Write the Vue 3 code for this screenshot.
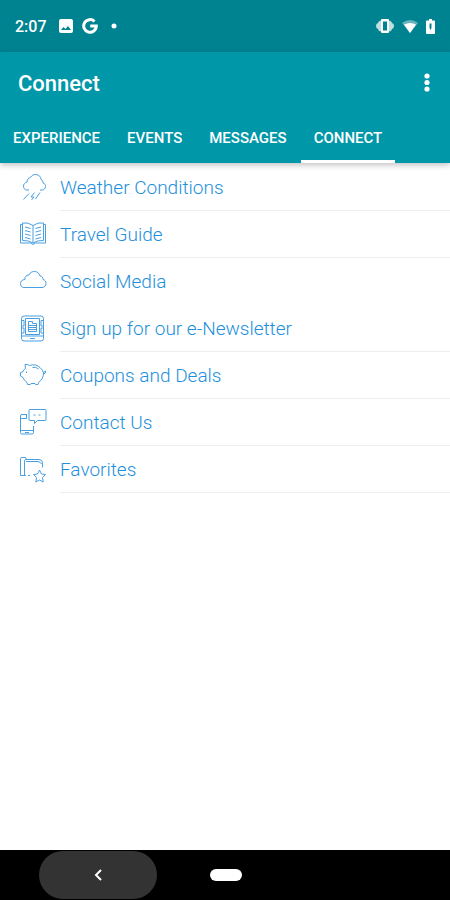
<script setup>
import { ref } from 'vue'

const tabs = ['Experience', 'Events', 'Messages', 'Connect']
const active = ref('Connect')

const links = [
  { icon: 'weather', label: 'Weather Conditions' },
  { icon: 'book', label: 'Travel Guide' },
  { icon: 'cloud', label: 'Social Media', plain: true },
  { icon: 'news', label: 'Sign up for our e-Newsletter' },
  { icon: 'piggy', label: 'Coupons and Deals' },
  { icon: 'contact', label: 'Contact Us' },
  { icon: 'favorites', label: 'Favorites' },
]
</script>

<template>
  <div class="screen">
    <div class="status">
      <span class="time">2:07</span>
      <svg class="photo" width="14" height="14" viewBox="0 0 14 14">
        <path fill-rule="evenodd" d="M2 0h10a2 2 0 0 1 2 2v10a2 2 0 0 1-2 2H2a2 2 0 0 1-2-2V2a2 2 0 0 1 2-2zM2 11h10L9 7 6.500 10 4.500 8z" />
      </svg>
      <svg class="google" width="16" height="16" viewBox="0 0 16 16">
        <path class="thick" d="M12.500 3.500A6.300 6.300 0 1 0 14.300 8H8.200" />
      </svg>
      <svg class="dot" width="6" height="6" viewBox="0 0 6 6"><circle cx="3" cy="3" r="2.500" /></svg>
      <svg class="vibrate" width="18" height="14" viewBox="0 0 18 14">
        <path fill-rule="evenodd" d="M6 0h6a1 1 0 0 1 1 1v12a1 1 0 0 1-1 1H6a1 1 0 0 1-1-1V1a1 1 0 0 1 1-1zM7 2.500v9h4v-9z" />
        <path class="dim" d="M5 1.500v11Q2.500 12.500 2 10 0 9.500 0 7T2 4Q2.500 1.500 5 1.500zM13 1.500v11Q15.500 12.500 16 10 18 9.500 18 7T16 4Q15.500 1.500 13 1.500z" />
      </svg>
      <svg class="wifi" width="16" height="13" viewBox="0 0 16 13">
        <path class="faint" d="M0 3Q8-3 16 3L8 13z" />
        <path d="M2 4.500Q8 1.500 14 4.500L8 13z" />
      </svg>
      <svg class="battery" width="9" height="15" viewBox="0 0 9 15">
        <path fill-rule="evenodd" d="M3 0h3v1.500h2a1 1 0 0 1 1 1V14a1 1 0 0 1-1 1H1a1 1 0 0 1-1-1V2.500a1 1 0 0 1 1-1h2zM3.500 4.500v4l.5 2h1l.5-2v-4z" />
      </svg>
    </div>

    <header class="header">
      <div class="bar">
        <h1>Connect</h1>
        <button class="more" aria-label="More options">
          <svg width="6" height="20" viewBox="0 0 6 20">
            <circle cx="3" cy="3" r="2.600" />
            <circle cx="3" cy="9.500" r="2.600" />
            <circle cx="3" cy="16" r="2.600" />
          </svg>
        </button>
      </div>
      <nav class="tabs">
        <button
          v-for="tab in tabs"
          :key="tab"
          class="tab"
          :class="{ active: tab === active }"
          @click="active = tab"
        >{{ tab }}</button>
      </nav>
    </header>

    <ul class="links">
      <li v-for="link in links" :key="link.label">
        <a href="#" class="link">
          <svg class="icon" width="28" height="28" viewBox="0 0 28 28">
            <g v-if="link.icon === 'weather'">
              <path d="M10 16H8C5.500 16 4.500 14 4.500 12S6 8.500 8 8C8 5.500 9.500 4 11.500 3.500 13 1 14.500.5 16.500.5 20 .5 22 3 22 5.500 23.500 6 24 7 24 9 26 9.500 26.500 11 26.500 12.500 26.500 14.500 25 16 23 16H21" />
              <path d="M10 19.500 4.500 25.500M15.500 18.500l-3.500 4.500h3L12.500 26M21 18.500 16.500 25" />
            </g>
            <g v-else-if="link.icon === 'book'">
              <path d="M14 4.500Q9 1 3.500 2V19.500Q9 19 14 22 19 19 24.500 19.500V2Q19 1 14 4.500zV22" />
              <path d="M3.500 3.500H1.500V22H11.500Q14 25 16.500 22H26.500V3.500H24.500" />
              <path d="M6 6l5.500 1.500M6 9.500l5.500 1.500M6 13l5.500 1.500M6 16.500l5.500 1.500M22 6 16.500 7.500M22 9.500l-5.500 1.500M22 13 16.500 14.500M22 16.500l-5.500 1.500" />
            </g>
            <path v-else-if="link.icon === 'cloud'" d="M5 19.500C2.500 19.500 1.500 17.500 1.500 15.500S3 11.500 6 11.500C5.500 9 7 7 10 7 11 4.500 13 3.500 15.500 3.500 18.500 3.500 20.500 5.500 21 8 23 8 24 9.500 24 11.500 26 12 27 13.500 27 15.500S25.500 19.500 23 19.500z" />
            <g v-else-if="link.icon === 'news'">
              <rect x="2.500" y="1" width="22" height="25" rx="2.500" />
              <path d="M6.500 3.500H20.500V19.500H6.500zM2.500 5.500H5V11H2.500M2.500 13H5V18H2.500M24.500 5.500H22V11H24.500M24.500 13H22V18H24.500M3 21H24M11 23.500H16" />
              <path d="M9.500 6.500H13.500V8.500H17.500V16.500H9.500zM10 10.500H17M10 12.500H17M10 14.500H17" />
            </g>
            <g v-else-if="link.icon === 'piggy'">
              <path d="M6.500 6.500 6 2.500Q8.500 2 10.500 3.500 17 1.500 21 5.500 24 8 24.500 11 24.500 17 19.500 20.500L19 22.500H16.500L16 21.500H12L11.500 22.500H8.500L8 20.500Q5 18.500 4 15.500L1.500 14V10.500L3.500 10Q4.500 7.500 6.500 6.500z" />
              <path d="M13.500 5.500Q17 4.500 19.500 7M7.500 9.500v1.500M24.500 12Q27 11.500 26.500 9L24 11" />
            </g>
            <g v-else-if="link.icon === 'contact'">
              <path d="M8 5.500H3Q1.500 5.500 1.500 7V23.500Q1.500 25 3 25H13Q14.500 25 14.500 23.500V17M1.500 21.500H14.500M1.500 9.500H7.500V5.500M6 23.500H10" />
              <path d="M11 .5H26Q27 .5 27 1.500V10.500Q27 11.500 26 11.500H18.500L15.500 14.500V11.500H11Q10 11.500 10 10.500V1.500Q10 .5 11 .5zM14.500 6H16.500M19.500 6H21.500" />
            </g>
            <g v-else>
              <path d="M11 19.500H9M7 19.500H1.500V2.500Q1.500 1.500 3 1.500H6Q7 1.500 7 2.500L5.500 5V19.500M7 3.500H20Q23.500 3.500 23.500 7V11.500M7 5.500H19Q21.500 6 22.500 8" />
              <path d="M20.500 14L22.500 18 26.500 18.500 23.500 21.500 24.200 26 20.500 24 16.800 26 17.500 21.500 14.500 18.500 18.500 18z" />
            </g>
          </svg>
          <span class="label" :class="{ plain: link.plain }">{{ link.label }}</span>
        </a>
      </li>
    </ul>

    <footer class="navbar">
      <button class="back" aria-label="Back">
        <svg width="8" height="12" viewBox="0 0 8 12"><path d="M7 1 2 6l5 5" /></svg>
      </button>
      <button class="home" aria-label="Home"></button>
    </footer>
  </div>
</template>

<style>
body {
  background: #fff;
}
</style>

<style scoped>
.screen {
  display: flex;
  flex-direction: column;
  min-height: 100vh;
  font-family: Roboto, "Liberation Sans", sans-serif;
}

button {
  border: 0;
  padding: 0;
  background: none;
  font: inherit;
  color: inherit;
  cursor: pointer;
}

svg {
  display: block;
  flex: none;
}

.status {
  display: flex;
  align-items: center;
  height: 52px;
  padding: 0 15px;
  background: #008391;
  color: #fff;
  fill: #fff;
}
.time {
  font-size: 16px;
  font-weight: 500;
}
.photo {
  margin-left: 12px;
}
.google {
  margin-left: 9px;
}
.google .thick {
  fill: none;
  stroke: #fff;
  stroke-width: 3;
}
.dot {
  margin-left: 13px;
}
.vibrate {
  margin-left: auto;
}
.dim {
  opacity: .75;
}
.faint {
  opacity: .4;
}
.wifi {
  margin-left: 8px;
}
.battery {
  margin-left: 8px;
}

.header {
  background: #0097a9;
  color: #fff;
  box-shadow: 0 2px 6px #00000040;
}
.bar {
  display: flex;
  align-items: center;
  justify-content: space-between;
  height: 62px;
  padding: 0 20px 0 18px;
}
.bar h1 {
  margin: 0;
  font-size: 22px;
  font-weight: 500;
}
.more {
  fill: #fff;
}
.tabs {
  display: flex;
  gap: 1px;
  height: 49px;
}
.tab {
  padding: 0 13px;
  border-top: 2px solid transparent;
  border-bottom: 3px solid transparent;
  font-size: 15px;
  font-weight: 500;
  text-transform: uppercase;
}
.tab.active {
  border-bottom-color: #fff;
}

.links {
  flex: 1;
  margin: 0;
  padding: 1px 0 0;
  list-style: none;
}
.link {
  display: flex;
  align-items: center;
  height: 47px;
  padding-left: 19px;
  color: #1e8fdc;
  text-decoration: none;
}
.icon {
  margin-right: 13px;
  fill: none;
  stroke: #4a9fe0;
  stroke-linejoin: round;
}
.label {
  flex: 1;
  padding-top: 2px;
  border-bottom: 1px solid #eee;
  font-size: 19px;
  font-weight: 300;
  line-height: 44px;
}
.label.plain {
  border-color: transparent;
}

.navbar {
  display: flex;
  align-items: center;
  height: 50px;
  padding-left: 39px;
  background: #000;
}
.back {
  display: flex;
  align-items: center;
  justify-content: center;
  width: 118px;
  height: 48px;
  border-radius: 24px;
  background: #333;
}
.back svg {
  fill: none;
  stroke: #fff;
  stroke-width: 2;
}
.home {
  width: 32px;
  height: 12px;
  margin-left: 53px;
  border-radius: 6px;
  background: #fff;
}
</style>
